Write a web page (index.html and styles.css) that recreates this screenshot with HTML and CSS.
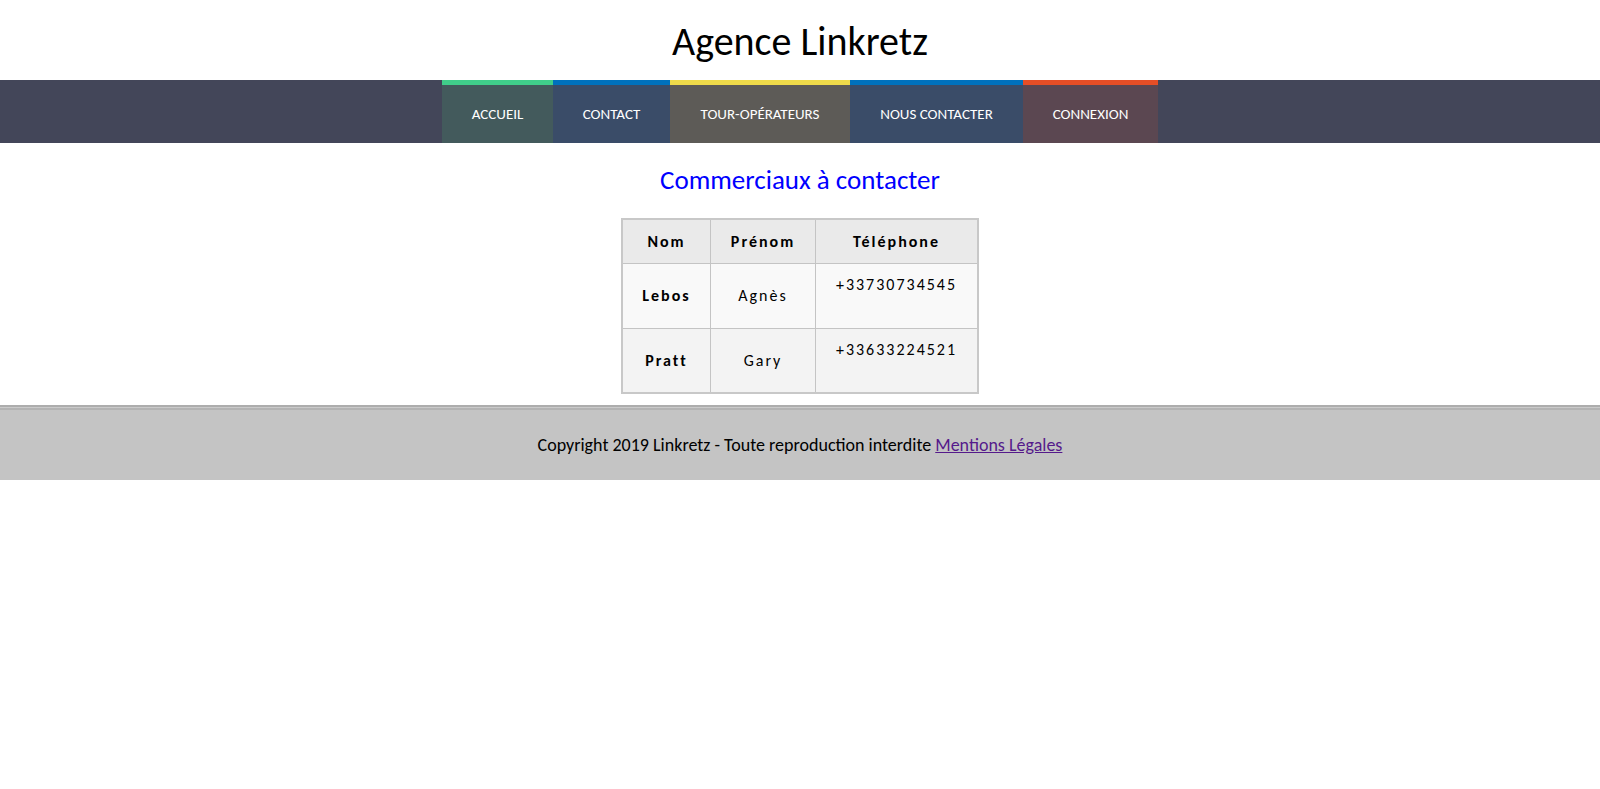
FILE: index.html
```html
<!DOCTYPE html>
<html lang="fr">
<head>
<meta charset="utf-8">
<title>Agence Linkretz</title>
<link rel="stylesheet" href="styles.css">
</head>
<body>
<header class="site-header">
  <h1 class="site-title">Agence Linkretz</h1>
</header>
<nav class="main-nav">
  <ul class="nav-list">
    <li class="nav-item nav-accueil"><a href="#">ACCUEIL</a></li>
    <li class="nav-item nav-contact"><a href="#">CONTACT</a></li>
    <li class="nav-item nav-tour"><a href="#">TOUR-OPÉRATEURS</a></li>
    <li class="nav-item nav-nous"><a href="#">NOUS CONTACTER</a></li>
    <li class="nav-item nav-connexion"><a href="#">CONNEXION</a></li>
  </ul>
</nav>
<main class="content">
  <h2 class="section-title">Commerciaux à contacter</h2>
  <table class="contacts">
    <thead>
      <tr class="row-head">
        <th class="col-nom">Nom</th>
        <th class="col-prenom">Prénom</th>
        <th class="col-tel">Téléphone</th>
      </tr>
    </thead>
    <tbody>
      <tr class="row-odd">
        <th class="cell-nom">Lebos</th>
        <td class="cell-prenom">Agnès</td>
        <td class="cell-tel">+33730734545</td>
      </tr>
      <tr class="row-even">
        <th class="cell-nom">Pratt</th>
        <td class="cell-prenom">Gary</td>
        <td class="cell-tel">+33633224521</td>
      </tr>
    </tbody>
  </table>
</main>
<footer class="site-footer">
  <p class="footer-text">Copyright 2019 Linkretz - Toute reproduction interdite <a class="footer-link" href="#">Mentions Légales</a></p>
</footer>
</body>
</html>
```
FILE: styles.css
```css
html, body {
  margin: 0;
  padding: 0;
  background: #ffffff;
}
body {
  font-family: Carlito, Lato, "Open Sans", sans-serif;
  color: #000;
}
.site-header {
  height: 80px;
  display: flex;
  align-items: center;
  justify-content: center;
}
.site-title {
  margin: 0;
  font-size: 40px;
  font-weight: 400;
  line-height: 1;
  padding-top: 3px;
}
.main-nav {
  background: #434659;
  height: 63px;
}
.nav-list {
  list-style: none;
  margin: 0;
  padding: 0;
  display: flex;
  justify-content: center;
  height: 100%;
}
.nav-item {
  border-top: 5px solid;
  display: flex;
  align-items: center;
  justify-content: center;
}
.nav-item a {
  color: #ffffff;
  text-decoration: none;
  font-size: 15px;
}
.nav-accueil { width: 111px; background: #435a5c; border-top-color: #40ce8a; }
.nav-contact { width: 117px; background: #3a4c68; border-top-color: #0071bd; }
.nav-tour { width: 180px; background: #5d5b57; border-top-color: #efdb4a; }
.nav-nous { width: 173px; background: #3a4c68; border-top-color: #0071bd; }
.nav-connexion { width: 135px; background: #5b4751; border-top-color: #e64e26; }

.content {
  display: flex;
  flex-direction: column;
  align-items: center;
  padding-top: 19px;
  padding-bottom: 11px;
}
.section-title {
  margin: 0 0 21px;
  color: #0000ff;
  font-size: 27px;
  font-weight: 400;
  line-height: 35px;
}
.contacts {
  border-collapse: collapse;
  border: 2px solid #c8c8c8;
  font-size: 16px;
  letter-spacing: 2px;
}
.contacts th,
.contacts td {
  border: 1px solid #c4c4c4;
  text-align: center;
  padding: 0;
}
.row-head { height: 44px; }
.row-odd, .row-even { height: 65px; }
.contacts thead th {
  background: #eaeaea;
  font-weight: 700;
}
.col-nom { width: 87px; }
.col-prenom { width: 104px; }
.col-tel { width: 161px; }
.row-odd th, .row-odd td { background: #f9f9f9; }
.row-even th, .row-even td { background: #f3f3f3; }
.cell-nom { font-weight: 700; }
.cell-prenom { font-weight: 400; }
.contacts .cell-tel {
  vertical-align: top;
  padding-top: 11px;
}
.site-footer {
  background: #c4c4c4;
  border-top: 2px solid #adadad;
  box-shadow: inset 0 1px 0 #cacaca, inset 0 3px 0 #b3b3b3;
  height: 73px;
  display: flex;
  align-items: center;
  justify-content: center;
}
.footer-text {
  margin: 0;
  font-size: 18px;
  padding-top: 2px;
}
.footer-link {
  color: #551a8b;
}
```
